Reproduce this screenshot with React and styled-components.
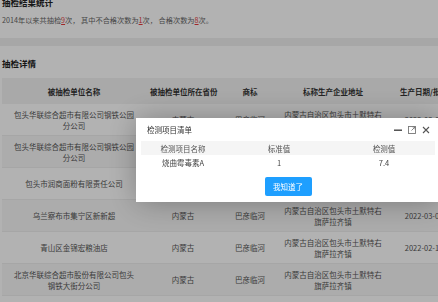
import React from "react";
import styled, { createGlobalStyle } from "styled-components";

const GlobalStyle = createGlobalStyle`
  html, body {
    margin: 0;
    padding: 0;
    background: #fff;
    overflow: hidden;
  }
  body {
    font-family: "Noto Sans CJK SC", "Noto Sans", sans-serif;
    color: #333;
  }
`;

const rows = [
  {
    name: "包头华联综合超市有限公司钢铁公园分公司",
    province: "内蒙古",
    brand: "巴彦临河",
    address: "内蒙古自治区包头市土默特右旗萨拉齐镇",
    date: "2022-03-01",
  },
  {
    name: "包头华联综合超市有限公司钢铁公园分公司",
    province: "内蒙古",
    brand: "巴彦临河",
    address: "内蒙古自治区包头市土默特右旗萨拉齐镇",
    date: "2022-03-01",
  },
  {
    name: "包头市润商面粉有限责任公司",
    province: "内蒙古",
    brand: "巴彦临河",
    address: "内蒙古自治区包头市土默特右旗萨拉齐镇",
    date: "2022-03-05",
  },
  {
    name: "乌兰察布市集宁区新新超",
    province: "内蒙古",
    brand: "巴彦临河",
    address: "内蒙古自治区包头市土默特右旗萨拉齐镇",
    date: "2022-03-01",
  },
  {
    name: "青山区金锦宏粮油店",
    province: "内蒙古",
    brand: "巴彦临河",
    address: "内蒙古自治区包头市土默特右旗萨拉齐镇",
    date: "2022-02-15",
  },
  {
    name: "北京华联综合超市股份有限公司包头钢铁大街分公司",
    province: "内蒙古",
    brand: "巴彦临河",
    address: "内蒙古自治区包头市土默特右旗萨拉齐镇",
    date: "",
  },
];

const columns = [144, 74, 60, 106, 76];

function App() {
  return (
    <>
      <GlobalStyle />
      <Page>
        <Section>
          <Heading>抽检结果统计</Heading>
          <Summary>
            2014年以来共抽检<Num>9</Num>次， 其中不合格次数为<Num>1</Num>次， 合格次数为
            <Num>8</Num>次。
          </Summary>
        </Section>
        <Divider />
        <Section>
          <Heading $top={11}>抽检详情</Heading>
          <Table>
            <colgroup>
              {columns.map((w, i) => (
                <col key={i} style={{ width: w }} />
              ))}
            </colgroup>
            <thead>
              <tr>
                <Th>被抽检单位名称</Th>
                <Th>被抽检单位所在省份</Th>
                <Th>商标</Th>
                <Th>标称生产企业地址</Th>
                <Th>生产日期/批次</Th>
              </tr>
            </thead>
            <tbody>
              {rows.map((r, i) => (
                <Row key={i}>
                  <Td>{r.name}</Td>
                  <Td>{r.province}</Td>
                  <Td>{r.brand}</Td>
                  <Td $tight>{r.address}</Td>
                  <Td>{r.date}</Td>
                </Row>
              ))}
            </tbody>
          </Table>
        </Section>
      </Page>

      {/* layer shade + dialog */}
      <Shade />
      <Dialog>
        <DialogTitle>
          <span>检测项目清单</span>
          <TitleTools>
            <svg width="8" height="8" viewBox="0 0 8 8">
              <rect x="0" y="3.5" width="8" height="1.4" fill="#444" />
            </svg>
            <svg width="8" height="8" viewBox="0 0 8 8">
              <rect x="0.5" y="0.5" width="7" height="7" fill="none" stroke="#777" strokeWidth="0.9" />
              <path d="M3.5 4.5 L7 1 M4.6 1 H7 V3.4" fill="none" stroke="#777" strokeWidth="0.9" />
            </svg>
            <svg width="8" height="8" viewBox="0 0 8 8">
              <path d="M1 1 L7 7 M7 1 L1 7" stroke="#555" strokeWidth="1.1" />
            </svg>
          </TitleTools>
        </DialogTitle>
        <DialogBody>
          <InnerTable>
            <colgroup>
              <col style={{ width: 84 }} />
              <col style={{ width: 108 }} />
              <col style={{ width: 102 }} />
            </colgroup>
            <thead>
              <tr>
                <InnerTh>检测项目名称</InnerTh>
                <InnerTh>标准值</InnerTh>
                <InnerTh>检测值</InnerTh>
              </tr>
            </thead>
            <tbody>
              <tr>
                <InnerTd>烧曲霉毒素A</InnerTd>
                <InnerTd>1</InnerTd>
                <InnerTd>7.4</InnerTd>
              </tr>
            </tbody>
          </InnerTable>
          <ButtonRow>
            <OkButton>我知道了</OkButton>
          </ButtonRow>
        </DialogBody>
      </Dialog>
    </>
  );
}

const Page = styled.div`
  margin-top: -4px;
  width: 470px;
`;

const Section = styled.div`
  padding: 0 2px;
`;

const Heading = styled.div`
  margin-top: ${(p) => p.$top || 0}px;
  font-size: 8.5px;
  line-height: 12px;
  font-weight: 700;
  color: #222;
`;

const Summary = styled.div`
  margin-top: 6px;
  font-size: 7.2px;
  line-height: 12px;
  color: #666;
  white-space: nowrap;
`;

const Num = styled.span`
  color: #e4393c;
  text-decoration: underline;
`;

const Divider = styled.div`
  margin-top: 12px;
  height: 8px;
  background: #f0f0f0;
`;

const Table = styled.table`
  margin-top: 9px;
  border-collapse: collapse;
  table-layout: fixed;
  width: 460px;
  font-size: 7.5px;
`;

const Th = styled.th`
  height: 26px;
  padding: 0 4px;
  background: #f2f2f2;
  color: #333;
  font-weight: 700;
  text-align: center;
  white-space: nowrap;
  overflow: hidden;
`;

const Row = styled.tr`
  border-bottom: 1px solid #eee;
  &:nth-child(even) {
    background: #f7f7f7;
  }
`;

const Td = styled.td`
  height: 31px;
  padding: 0 ${(p) => (p.$tight ? 3 : 11)}px;
  color: #555;
  line-height: 11px;
  text-align: center;
  vertical-align: middle;
`;

const Shade = styled.div`
  position: fixed;
  inset: 0;
  background: rgba(0, 0, 0, 0.3);
`;

const Dialog = styled.div`
  position: fixed;
  left: 136px;
  top: 118px;
  width: 304px;
  background: #fff;
  box-shadow: 1px 1px 30px rgba(0, 0, 0, 0.3);
`;

const DialogTitle = styled.div`
  height: 23px;
  padding: 0 10px 0 11px;
  display: flex;
  align-items: center;
  justify-content: space-between;
  font-size: 7.5px;
  color: #333;
`;

const TitleTools = styled.div`
  display: flex;
  align-items: center;
  gap: 6px;
`;

const DialogBody = styled.div`
  padding: 0 5px 6px;
`;

const InnerTable = styled.table`
  border-collapse: collapse;
  table-layout: fixed;
  width: 294px;
  font-size: 7.5px;
`;

const InnerTh = styled.th`
  height: 14px;
  padding: 0;
  background: #f5f5f5;
  color: #555;
  font-weight: 400;
  text-align: center;
`;

const InnerTd = styled.td`
  height: 15px;
  padding: 0;
  color: #444;
  text-align: center;
`;

const ButtonRow = styled.div`
  margin-top: 7px;
  display: flex;
  justify-content: center;
`;

const OkButton = styled.button`
  width: 47px;
  height: 19px;
  padding: 0;
  border: none;
  border-radius: 2px;
  background: #1e9fff;
  color: #fff;
  font-family: inherit;
  font-size: 7.5px;
`;

export default App;
